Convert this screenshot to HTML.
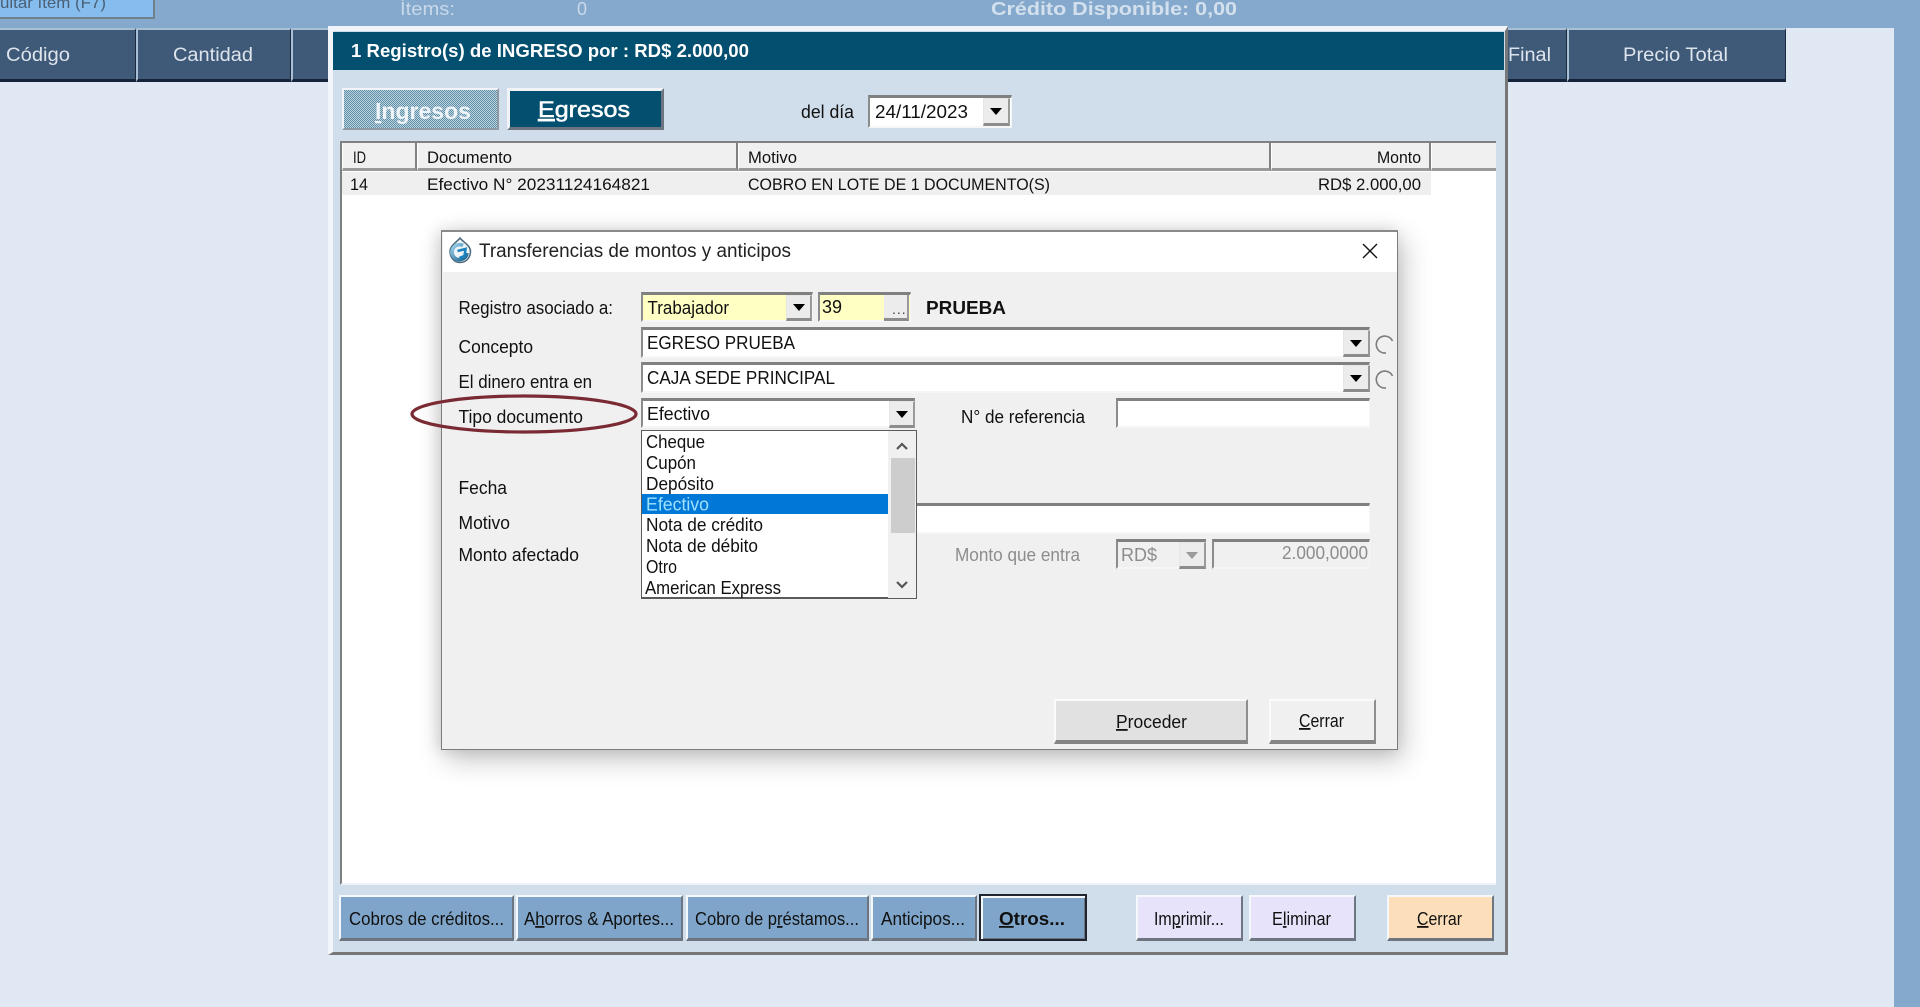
<!DOCTYPE html>
<html lang="es"><head><meta charset="utf-8"><title>Transferencias de montos y anticipos</title>
<style>
html,body{margin:0;padding:0;width:1920px;height:1007px;overflow:hidden;background:#e0e8f3}
div{position:absolute;box-sizing:border-box}
.hd{background:#3f5a78;border-top:2px solid #a9bfd6;border-left:2px solid #a9bfd6;border-right:1px solid #1c2c3e;border-bottom:3px solid #16243a;top:28px;height:54px}
.f{background:#fff;border-top:3px solid #808080;border-left:2px solid #8c8c8c;border-right:1px solid #f6f6f6;border-bottom:2px solid #f6f6f6}
.a{background:#ececec;border-right:2px solid #9a9a9a;border-bottom:3px solid #8c8c8c;border-top:1px solid #e6e6e6;border-left:1px solid #e6e6e6}
.a:after{content:"";position:absolute;left:50%;top:50%;margin:-3px 0 0 -6px;border:6px solid transparent;border-top:7px solid #000;border-bottom:0}
.dis:after{border-top-color:#999}
.bt{border-top:2px solid #f4f8fb;border-left:2px solid #f4f8fb;border-right:2px solid #6d7680;border-bottom:3px solid #6d7680;top:895px;height:46px}
.blue{background:#7fa6ca}.lil{background:#e7e3fb}
.g{background:#f0f0f0;border-top:2px solid #fafafa;border-left:2px solid #fafafa;border-right:2px solid #8e8e8e;border-bottom:4px solid #858585;top:699px;height:45px}
.col{top:143px;height:28px;background:#f0f0f0;border-right:2px solid #808080;border-bottom:3px solid #9a9a9a;border-left:1px solid #fff}
svg{position:absolute;left:0;top:0}
text{font-family:"Liberation Sans",sans-serif;font-size:18px;fill:#111}
</style></head><body>

<div style="left:0;top:0;width:1920px;height:28px;background:#85a9cc"></div>
<div style="left:1894px;top:0;width:26px;height:1007px;background:#85a9cc"></div>
<div style="left:-4px;top:-8px;width:159px;height:27px;background:#84bdee;border:2px solid #6f7f8c;border-top:0"></div>

<div class="hd" style="left:-2px;width:138px"></div>
<div class="hd" style="left:136px;width:155px"></div>
<div class="hd" style="left:291px;width:50px"></div>
<div class="hd" style="left:1500px;width:67px"></div>
<div class="hd" style="left:1567px;width:219px"></div>

<!-- main panel -->
<div style="left:328px;top:26px;width:1180px;height:929px;background:#d0deeb;border-top:5px solid #f1f5f9;border-left:5px solid #f1f5f9;border-right:3px solid #777;border-bottom:3px solid #777"></div>
<div style="left:333px;top:32px;width:1171px;height:38px;background:#034f6f"></div>

<div style="left:342px;top:88px;width:157px;height:42px;background:repeating-conic-gradient(#bcd0dd 0 25%,#5f92a8 0 50%) 0 0/2px 2px;border:2px solid #f0f4f8;border-right-color:#8f9aa5;border-bottom-color:#8f9aa5"></div>
<div style="left:507px;top:88px;width:157px;height:42px;background:#034f6f;border:3px solid #f0f4f8;border-right-color:#6d7680;border-bottom-color:#6d7680"></div>

<div class="f" style="left:868px;top:95px;width:144px;height:33px"></div>
<div class="a" style="left:983px;top:98px;width:27px;height:28px"></div>

<!-- list -->
<div style="left:340px;top:141px;width:1156px;height:744px;background:#fff;border-top:2px solid #808080;border-left:2px solid #808080;border-bottom:2px solid #eef1f5"></div>
<div class="col" style="left:342px;width:75px"></div>
<div class="col" style="left:417px;width:321px"></div>
<div class="col" style="left:738px;width:533px"></div>
<div class="col" style="left:1271px;width:160px"></div>
<div class="col" style="left:1431px;width:65px;border-right:0"></div>
<div style="left:342px;top:172px;width:1089px;height:23px;background:#efefef"></div>

<!-- bottom buttons -->
<div class="bt blue" style="left:339px;width:175px"></div>
<div class="bt blue" style="left:516px;width:167px"></div>
<div class="bt blue" style="left:686px;width:183px"></div>
<div class="bt blue" style="left:871px;width:106px"></div>
<div class="blue" style="left:979px;top:894px;width:108px;height:47px;border:2px solid #1f2630;box-shadow:inset 2px 2px 0 #f4f8fb,inset -1px -1px 0 #6d7680"></div>
<div class="bt lil" style="left:1136px;width:107px"></div>
<div class="bt lil" style="left:1249px;width:107px"></div>
<div class="bt" style="left:1387px;width:107px;background:#fcdfba"></div>

<!-- dialog -->
<div style="left:441px;top:230px;width:957px;height:520px;background:#f0f0f0;border:1px solid #7c7c7c;border-top:2px solid #8a8a8a;box-shadow:5px 9px 26px rgba(0,0,0,.24),-3px 0 14px rgba(0,0,0,.12)"></div>
<div style="left:443px;top:232px;width:954px;height:40px;background:#fff"></div>

<div class="f" style="left:641px;top:292px;width:172px;height:30px;background:#ffffc4"></div>
<div class="a" style="left:786px;top:295px;width:26px;height:26px"></div>
<div class="f" style="left:818px;top:292px;width:93px;height:30px;background:#ffffc4"></div>
<div style="left:884px;top:295px;width:25px;height:26px;background:#ececec;border-right:2px solid #9a9a9a;border-bottom:3px solid #8c8c8c"></div>

<div class="f" style="left:641px;top:327px;width:729px;height:31px"></div>
<div class="a" style="left:1343px;top:330px;width:27px;height:27px"></div>
<div class="f" style="left:641px;top:362px;width:729px;height:31px"></div>
<div class="a" style="left:1343px;top:365px;width:27px;height:27px"></div>
<div class="f" style="left:641px;top:398px;width:274px;height:30px;border-right:2px solid #8c8c8c"></div>
<div class="a" style="left:889px;top:401px;width:26px;height:27px"></div>
<div class="f" style="left:1116px;top:398px;width:254px;height:30px"></div>
<div class="f" style="left:641px;top:503px;width:729px;height:31px"></div>

<div class="f" style="left:1116px;top:539px;width:90px;height:30px;background:#f0f0f0;border-right-color:#8c8c8c"></div>
<div class="a dis" style="left:1179px;top:542px;width:27px;height:27px"></div>
<div class="f" style="left:1212px;top:539px;width:158px;height:30px;background:#f0f0f0"></div>

<!-- dropdown -->
<div style="left:641px;top:430px;width:276px;height:169px;background:#fff;border:1px solid #5a5a5a;border-bottom-width:2px"></div>
<div style="left:642px;top:494px;width:246px;height:20px;background:#0078d7"></div>
<div style="left:888px;top:431px;width:28px;height:167px;background:#f0f0f0"></div>
<div style="left:891px;top:458px;width:24px;height:75px;background:#cdcdcd"></div>

<div class="g" style="left:1054px;width:194px;background:#e1e1e1"></div>
<div class="g" style="left:1269px;width:107px"></div>

<svg width="1920" height="1007" viewBox="0 0 1920 1007">
<defs><linearGradient id="ic" x1="0" y1="0" x2="1" y2="1"><stop offset="0" stop-color="#9fd4ee"/><stop offset="1" stop-color="#12608f"/></linearGradient></defs>
<!-- top -->
<text x="0" y="8" textLength="106" lengthAdjust="spacingAndGlyphs" style="fill:#4a5f75;font-size:16px">uitar ítem (F7)</text>
<text x="400" y="15" textLength="55" lengthAdjust="spacingAndGlyphs" style="fill:#c9d9e9;font-size:18px">Ítems:</text>
<text x="577" y="15" textLength="10" lengthAdjust="spacingAndGlyphs" style="fill:#c9d9e9;font-size:18px">0</text>
<text x="991" y="15" textLength="246" lengthAdjust="spacingAndGlyphs" style="fill:#d3e0ed;font-size:18px;font-weight:bold">Crédito Disponible:  0,00</text>
<!-- headers -->
<text x="6" y="61" textLength="64" lengthAdjust="spacingAndGlyphs" style="fill:#dde4ec;font-size:19px">Código</text>
<text x="173" y="61" textLength="80" lengthAdjust="spacingAndGlyphs" style="fill:#dde4ec;font-size:19px">Cantidad</text>
<text x="1508" y="61" textLength="43" lengthAdjust="spacingAndGlyphs" style="fill:#dde4ec;font-size:19px">Final</text>
<text x="1623" y="61" textLength="105" lengthAdjust="spacingAndGlyphs" style="fill:#dde4ec;font-size:19px">Precio Total</text>
<!-- panel -->
<text x="351" y="57" textLength="398" lengthAdjust="spacingAndGlyphs" style="fill:#fff;font-size:18px;font-weight:bold">1 Registro(s) de INGRESO por : RD$ 2.000,00</text>
<text x="375" y="119" textLength="96" lengthAdjust="spacingAndGlyphs" style="fill:#eef4f8;font-size:23px;font-weight:bold"><tspan text-decoration="underline">I</tspan>ngresos</text>
<text x="538" y="117" textLength="92" lengthAdjust="spacingAndGlyphs" style="fill:#fff;font-size:22px;stroke:#fff;stroke-width:.5px"><tspan text-decoration="underline">E</tspan>gresos</text>
<text x="801" y="118" textLength="53" lengthAdjust="spacingAndGlyphs">del día</text>
<text x="875" y="118" textLength="93" lengthAdjust="spacingAndGlyphs">24/11/2023</text>
<text x="353" y="163" textLength="13" lengthAdjust="spacingAndGlyphs" style="font-size:17px">ID</text>
<text x="427" y="163" textLength="85" lengthAdjust="spacingAndGlyphs" style="font-size:17px">Documento</text>
<text x="748" y="163" textLength="49" lengthAdjust="spacingAndGlyphs" style="font-size:17px">Motivo</text>
<text x="1377" y="163" textLength="44" lengthAdjust="spacingAndGlyphs" style="font-size:17px">Monto</text>
<text x="350" y="190" textLength="18" lengthAdjust="spacingAndGlyphs" style="font-size:17px">14</text>
<text x="427" y="190" textLength="223" lengthAdjust="spacingAndGlyphs" style="font-size:17px">Efectivo N° 20231124164821</text>
<text x="748" y="190" textLength="302" lengthAdjust="spacingAndGlyphs" style="font-size:17px">COBRO EN LOTE DE 1 DOCUMENTO(S)</text>
<text x="1318" y="190" textLength="103" lengthAdjust="spacingAndGlyphs" style="font-size:17px">RD$ 2.000,00</text>
<!-- bottom buttons -->
<text x="349" y="925" textLength="155" lengthAdjust="spacingAndGlyphs">Cobros de créditos...</text>
<text x="524" y="925" textLength="150" lengthAdjust="spacingAndGlyphs">A<tspan text-decoration="underline">h</tspan>orros &amp; Aportes...</text>
<text x="695" y="925" textLength="164" lengthAdjust="spacingAndGlyphs">Cobro de p<tspan text-decoration="underline">r</tspan>éstamos...</text>
<text x="881" y="925" textLength="84" lengthAdjust="spacingAndGlyphs">Anticipos...</text>
<text x="999" y="925" textLength="66" lengthAdjust="spacingAndGlyphs" style="font-weight:bold"><tspan text-decoration="underline">O</tspan>tros...</text>
<text x="1154" y="925" textLength="70" lengthAdjust="spacingAndGlyphs">Im<tspan text-decoration="underline">p</tspan>rimir...</text>
<text x="1272" y="925" textLength="59" lengthAdjust="spacingAndGlyphs">E<tspan text-decoration="underline">l</tspan>iminar</text>
<text x="1417" y="925" textLength="45" lengthAdjust="spacingAndGlyphs"><tspan text-decoration="underline">C</tspan>errar</text>
<!-- dialog title icon -->
<path d="M460 238 C463 242 470 245 470.500 251 C470.500 258 466 262.500 460 262.500 C454.500 262.500 450 258 450 251 C450.500 245 457 242 460 238Z" fill="#eef3f6" stroke="#4e6a7a" stroke-width="1.500"/>
<path d="M463 245.500 A7.500 7.500 0 1 0 467 253" fill="none" stroke="url(#ic)" stroke-width="3.600"/>
<path d="M457.500 251 L465.500 249 L464.500 256 L459.500 258" fill="none" stroke="#1a83bd" stroke-width="2.600"/>
<text x="479" y="257" textLength="312" lengthAdjust="spacingAndGlyphs" style="font-size:19px;fill:#222">Transferencias de montos y anticipos</text>
<path d="M1363 244 L1377 258 M1377 244 L1363 258" stroke="#111" stroke-width="1.400" fill="none"/>
<!-- dialog labels -->
<text x="458.500" y="314" textLength="154.500" lengthAdjust="spacingAndGlyphs">Registro asociado a:</text>
<text x="458.500" y="353" textLength="74.500" lengthAdjust="spacingAndGlyphs">Concepto</text>
<text x="458.500" y="388" textLength="133.500" lengthAdjust="spacingAndGlyphs">El dinero entra en</text>
<text x="458.500" y="423" textLength="124.500" lengthAdjust="spacingAndGlyphs">Tipo documento</text>
<text x="458.500" y="494" textLength="48.500" lengthAdjust="spacingAndGlyphs">Fecha</text>
<text x="458.500" y="529" textLength="51.500" lengthAdjust="spacingAndGlyphs">Motivo</text>
<text x="458.500" y="561" textLength="120.500" lengthAdjust="spacingAndGlyphs">Monto afectado</text>
<text x="647.500" y="314" textLength="81.500" lengthAdjust="spacingAndGlyphs">Trabajador</text>
<text x="822" y="313" textLength="20" lengthAdjust="spacingAndGlyphs">39</text>
<text x="892" y="314" style="font-size:14px;letter-spacing:1px;fill:#444">...</text>
<text x="926" y="314" textLength="80" lengthAdjust="spacingAndGlyphs" style="font-weight:bold">PRUEBA</text>
<text x="647" y="349" textLength="148" lengthAdjust="spacingAndGlyphs">EGRESO PRUEBA</text>
<text x="647" y="384" textLength="188" lengthAdjust="spacingAndGlyphs">CAJA SEDE PRINCIPAL</text>
<text x="647" y="420" textLength="63" lengthAdjust="spacingAndGlyphs">Efectivo</text>
<text x="961" y="423" textLength="124" lengthAdjust="spacingAndGlyphs">N° de referencia</text>
<text x="955" y="561" textLength="125" lengthAdjust="spacingAndGlyphs" style="fill:#8c8c8c">Monto que entra</text>
<text x="1121" y="561" textLength="36" lengthAdjust="spacingAndGlyphs" style="fill:#8c8c8c">RD$</text>
<text x="1282" y="559" textLength="86" lengthAdjust="spacingAndGlyphs" style="fill:#8c8c8c">2.000,0000</text>
<!-- dropdown items -->
<text x="646" y="448" textLength="59" lengthAdjust="spacingAndGlyphs">Cheque</text>
<text x="646" y="469" textLength="50" lengthAdjust="spacingAndGlyphs">Cupón</text>
<text x="646" y="490" textLength="68" lengthAdjust="spacingAndGlyphs">Depósito</text>
<text x="646" y="510.500" textLength="63" lengthAdjust="spacingAndGlyphs" style="fill:#9fe2ff">Efectivo</text>
<text x="646" y="531" textLength="117" lengthAdjust="spacingAndGlyphs">Nota de crédito</text>
<text x="646" y="552" textLength="112" lengthAdjust="spacingAndGlyphs">Nota de débito</text>
<text x="646" y="573" textLength="31" lengthAdjust="spacingAndGlyphs">Otro</text>
<text x="645" y="594" textLength="136" lengthAdjust="spacingAndGlyphs">American Express</text>
<path d="M897 449 L902 444 L907 449" fill="none" stroke="#555" stroke-width="2.200"/>
<path d="M897 582 L902 587 L907 582" fill="none" stroke="#555" stroke-width="2.200"/>
<!-- radios -->
<path d="M1392.500 341 A8.500 8.500 0 1 0 1386 353" fill="none" stroke="#7d7d7d" stroke-width="1.600"/>
<path d="M1392.500 376 A8.500 8.500 0 1 0 1386 388" fill="none" stroke="#7d7d7d" stroke-width="1.600"/>
<!-- ellipse -->
<ellipse cx="524" cy="414" rx="112" ry="18" fill="none" stroke="#7a2a33" stroke-width="3.200"/>
<!-- dialog buttons -->
<text x="1116" y="728" textLength="71" lengthAdjust="spacingAndGlyphs"><tspan text-decoration="underline">P</tspan>roceder</text>
<text x="1299" y="727" textLength="45" lengthAdjust="spacingAndGlyphs"><tspan text-decoration="underline">C</tspan>errar</text>
</svg>
</body></html>
